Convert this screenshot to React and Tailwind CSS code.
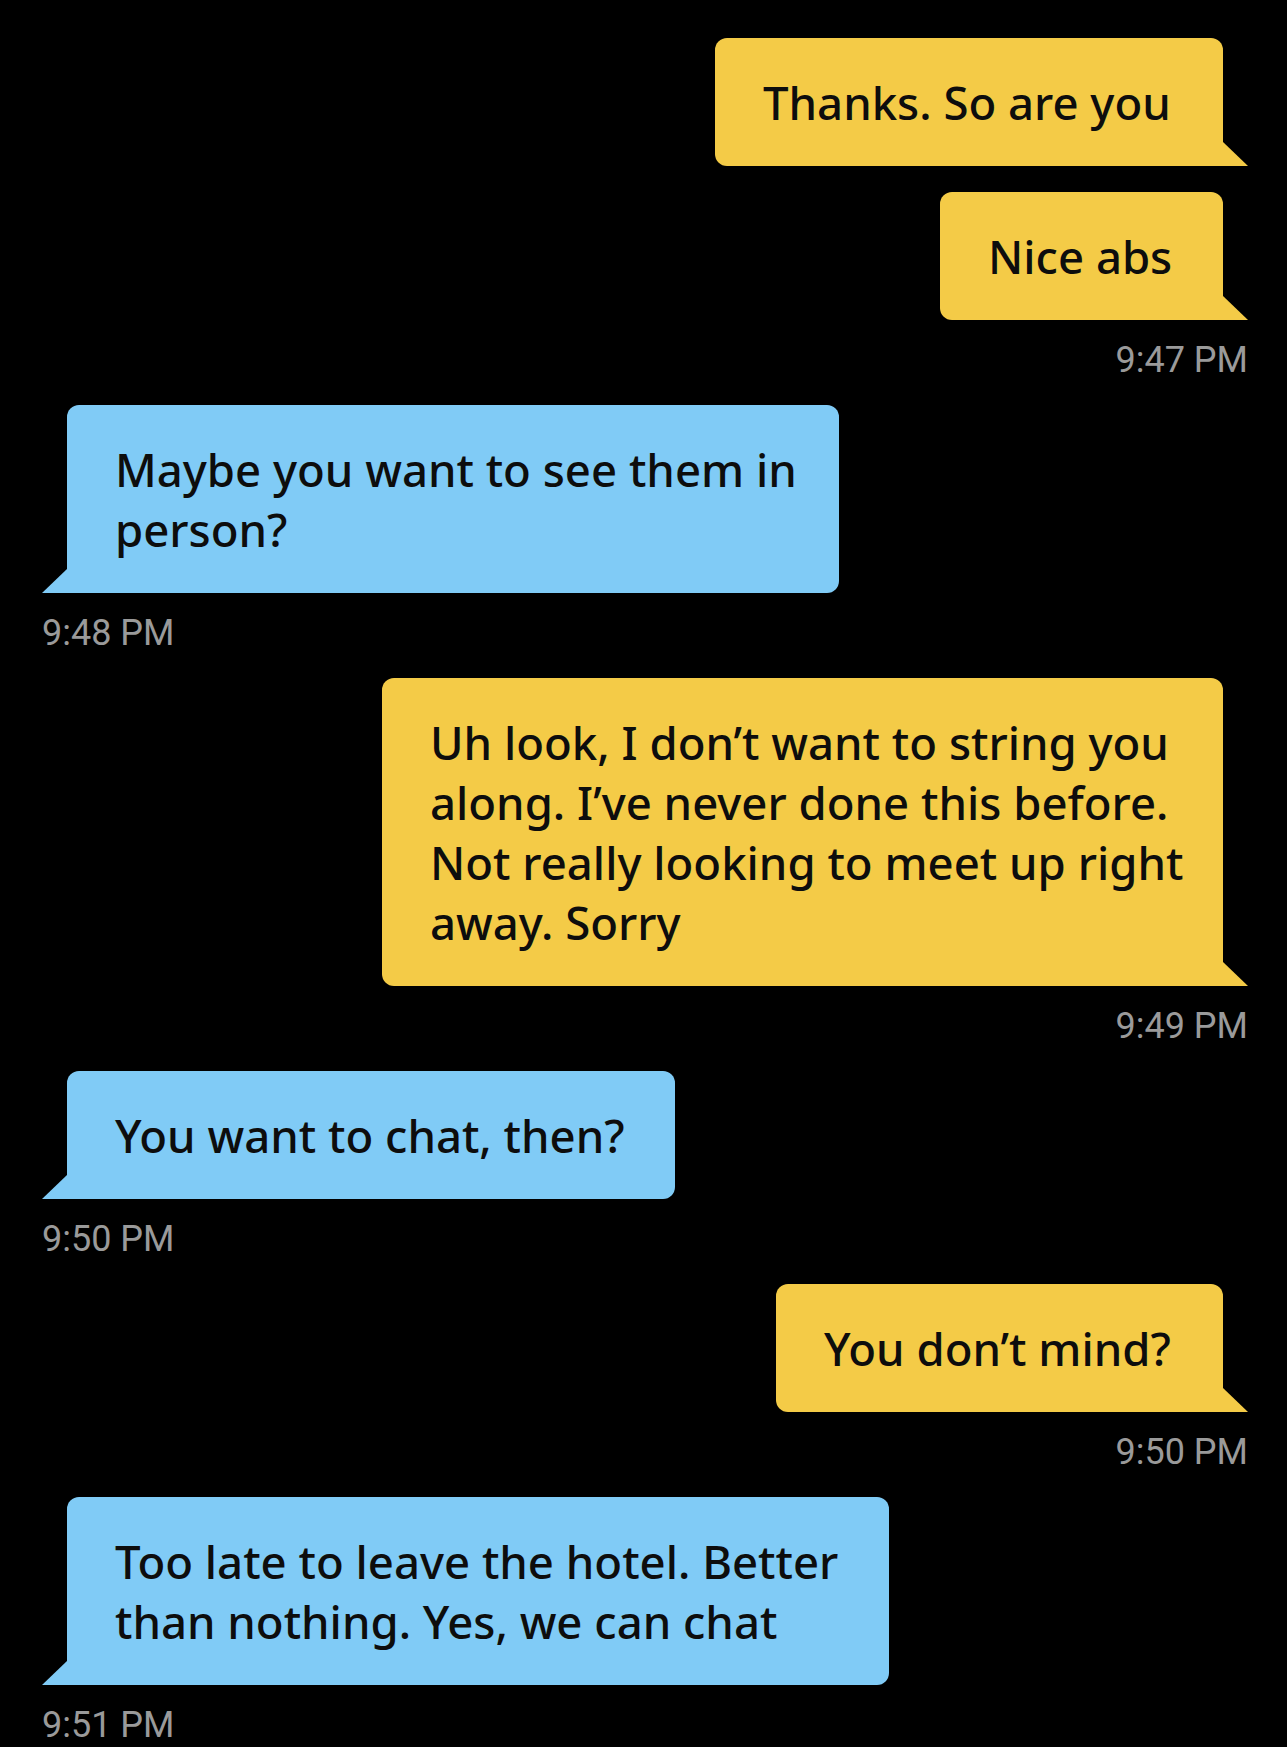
const messages = [
  { side: "me", lines: ["Thanks. So are you"], width: "w-[508px]" },
  { side: "me", lines: ["Nice abs"], width: "w-[283px]", time: "9:47 PM" },
  { side: "them", lines: ["Maybe you want to see them in", "person?"], width: "w-[772px]", time: "9:48 PM" },
  {
    side: "me",
    lines: [
      "Uh look, I don\u2019t want to string you",
      "along. I\u2019ve never done this before.",
      "Not really looking to meet up right",
      "away. Sorry",
    ],
    width: "w-[841px]",
    time: "9:49 PM",
  },
  { side: "them", lines: ["You want to chat, then?"], width: "w-[608px]", time: "9:50 PM" },
  { side: "me", lines: ["You don\u2019t mind?"], width: "w-[447px]", time: "9:50 PM" },
  {
    side: "them",
    lines: ["Too late to leave the hotel. Better", "than nothing. Yes, we can chat"],
    width: "w-[822px]",
    time: "9:51 PM",
  },
];

function Bubble({ side, lines, width }) {
  const mine = side === "me";
  return (
    <div
      className={`relative ${width} rounded-[12px] px-[48px] py-[34px] text-[45.5px] leading-[60px] font-medium text-[#0d0d0d] whitespace-nowrap ${
        mine ? "self-end rounded-br-none bg-[#f4cb47]" : "self-start rounded-bl-none bg-[#80cbf6]"
      }`}
    >
      {lines.map((line, i) => (
        <div key={i}>{line}</div>
      ))}
      <svg
        className={`absolute bottom-0 h-[24px] w-[25px] ${mine ? "-right-[25px]" : "-left-[25px]"}`}
        viewBox="0 0 25 24"
        aria-hidden="true"
      >
        <polygon
          points={mine ? "0,0 25,24 0,24" : "25,0 0,24 25,24"}
          fill={mine ? "#f4cb47" : "#80cbf6"}
        />
      </svg>
    </div>
  );
}

export default function App() {
  return (
    <div className="min-h-[1747px] w-full bg-black pl-[42px] pr-[39px] pt-[38px] [font-family:'Noto_Sans',sans-serif]">
      <div className="flex flex-col">
        {messages.map((msg, i) => {
          const prev = messages[i - 1];
          const gap = i === 0 ? "" : prev.time ? "mt-[25px]" : "mt-[26px]";
          return (
            <div key={i} className={`flex flex-col ${gap}`}>
              <div className={`flex flex-col ${msg.side === "me" ? "mr-[25px]" : "ml-[25px]"}`}>
                <Bubble {...msg} />
              </div>
              {msg.time && (
                <div
                  className={`mt-[20px] text-[36px] leading-[40px] text-[#9a9a9a] [font-family:Roboto,sans-serif] ${
                    msg.side === "me" ? "text-right" : "text-left"
                  }`}
                >
                  {msg.time}
                </div>
              )}
            </div>
          );
        })}
      </div>
    </div>
  );
}
